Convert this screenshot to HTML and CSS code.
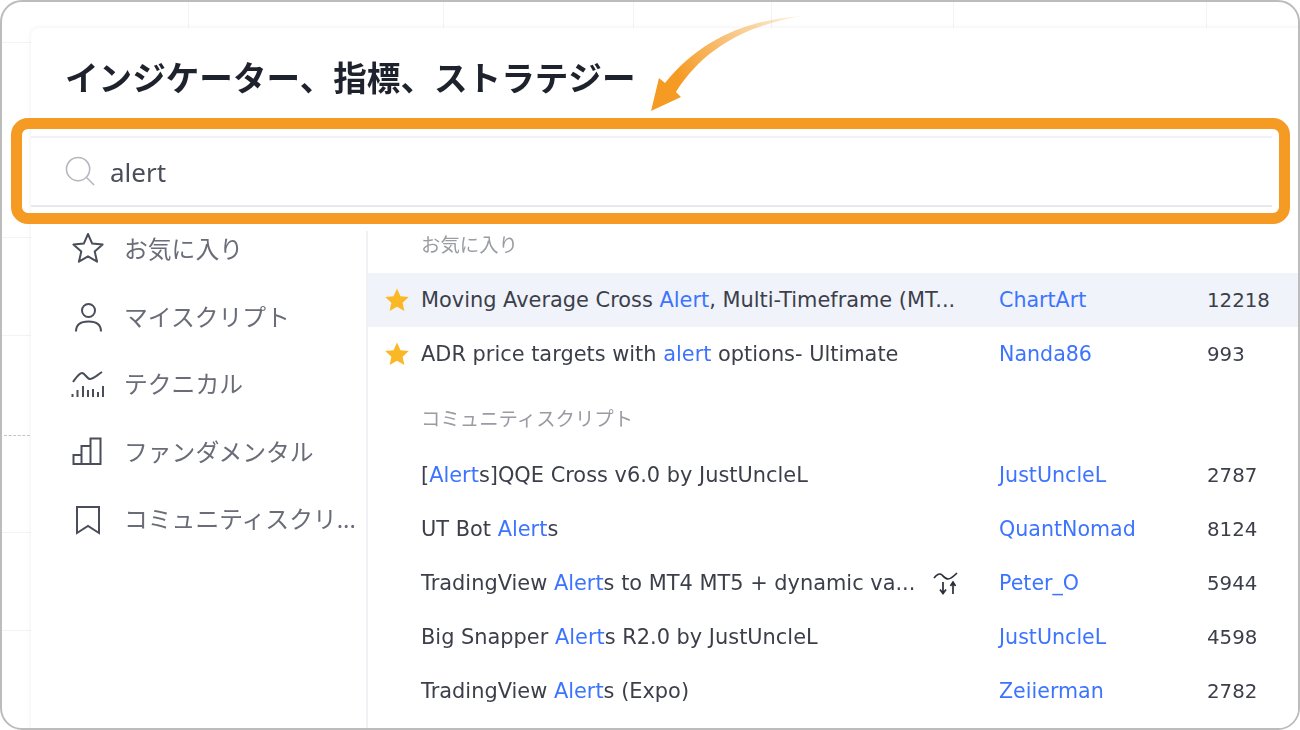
FILE: index.html
```html
<!DOCTYPE html>
<html lang="ja">
<head>
    <meta charset="UTF-8">
    <title>インジケーター、指標、ストラテジー</title>
    <link rel="stylesheet" href="styles.css">
</head>
<body>
    <div class="frame">
        <div class="chart-dots"></div>
        <div class="dialog">
            <h1 class="dialog-title">インジケーター、指標、ストラテジー</h1>
            <div class="search">
                <svg class="search-icon" viewBox="0 0 32 32" fill="none" stroke="#b4b6bd" stroke-width="1.6">
                    <circle cx="13.5" cy="13.5" r="12"/>
                    <path d="M22.5 22.5 30 30"/>
                </svg>
                <span class="search-text">alert</span>
            </div>
            <div class="dialog-body">
                <nav class="side">
                    <a href="#" class="side-link">
                        <svg class="side-icon" viewBox="0 0 34 34" fill="none" stroke="#4a4e5a" stroke-width="2">
                            <path d="M17 3l4.200 9.600 10.400 1-7.900 6.900 2.400 10.200-9.100-5.400-9.100 5.400 2.400-10.200-7.900-6.900 10.400-1z" stroke-linejoin="round"/>
                        </svg>
                        お気に入り
                    </a>
                    <a href="#" class="side-link">
                        <svg class="side-icon" viewBox="0 0 34 34" fill="none" stroke="#4a4e5a" stroke-width="2">
                            <circle cx="17.500" cy="12.500" r="6.500"/>
                            <path d="M5 33.500c0-6 4-10 12.500-10s12.500 4 12.500 10"/>
                        </svg>
                        マイスクリプト
                    </a>
                    <a href="#" class="side-link">
                        <svg class="side-icon" viewBox="0 0 34 34" fill="none" stroke="#4a4e5a" stroke-width="2">
                            <path d="M2 16C5 12 8 7 11 7c3 0 5 6 8 6s6-3 12-7"/>
                            <path d="M1.500 31v-3M6.500 31v-7M12 31v-11M17 31v-7M22 31v-8M27 31v-5M32 31v-11"/>
                        </svg>
                        テクニカル
                    </a>
                    <a href="#" class="side-link">
                        <svg class="side-icon" viewBox="0 0 34 34" fill="none" stroke="#4a4e5a" stroke-width="2">
                            <path d="M2.500 31V22h8v9zM10.500 31V13h9v18zM19.500 31V5.500h10V31z"/>
                        </svg>
                        ファンダメンタル
                    </a>
                    <a href="#" class="side-link">
                        <svg class="side-icon" viewBox="0 0 34 34" fill="none" stroke="#4a4e5a" stroke-width="2">
                            <path d="M6 6h22v26l-11-7-11 7z"/>
                        </svg>
                        コミュニティスクリ...
                    </a>
                </nav>
                <div class="results">
                    <div class="section-label">お気に入り</div>
                    <div class="row active">
                        <svg class="fav" viewBox="0 0 24 24"><path d="M12 .5l3.500 7.700 8.300.9-6.200 5.600 1.800 8.300L12 18.700 4.600 23l1.800-8.300L.2 9.100l8.300-.9z"/></svg>
                        <span class="name">Moving Average Cross <b>Alert</b>, Multi-Timeframe (MT...</span>
                        <span class="author">ChartArt</span>
                        <span class="count">12218</span>
                    </div>
                    <div class="row">
                        <svg class="fav" viewBox="0 0 24 24"><path d="M12 .5l3.500 7.700 8.300.9-6.200 5.600 1.800 8.300L12 18.700 4.600 23l1.800-8.300L.2 9.100l8.300-.9z"/></svg>
                        <span class="name">ADR price targets with <b>alert</b> options- Ultimate</span>
                        <span class="author">Nanda86</span>
                        <span class="count">993</span>
                    </div>
                    <div class="section-label second">コミュニティスクリプト</div>
                    <div class="row">
                        <span class="name">[<b>Alert</b>s]QQE Cross v6.0 by JustUncleL</span>
                        <span class="author">JustUncleL</span>
                        <span class="count">2787</span>
                    </div>
                    <div class="row">
                        <span class="name">UT Bot <b>Alert</b>s</span>
                        <span class="author">QuantNomad</span>
                        <span class="count">8124</span>
                    </div>
                    <div class="row">
                        <span class="name">TradingView <b>Alert</b>s to MT4 MT5 + dynamic va...</span>
                        <svg class="strategy-icon" viewBox="0 0 26 24" fill="none" stroke="#2a2e39" stroke-width="1.700">
                            <path d="M1 7c3-4 6-5 8-3s3.500 4 6 4 6-3 9-6"/>
                            <path d="M10 11v11M7 18.500l3 4 3-4"/>
                            <path d="M20 23V11M17.500 15l2.500-4 2.500 4"/>
                        </svg>
                        <span class="author">Peter_O</span>
                        <span class="count">5944</span>
                    </div>
                    <div class="row">
                        <span class="name">Big Snapper <b>Alert</b>s R2.0 by JustUncleL</span>
                        <span class="author">JustUncleL</span>
                        <span class="count">4598</span>
                    </div>
                    <div class="row">
                        <span class="name">TradingView <b>Alert</b>s (Expo)</span>
                        <span class="author">Zeiierman</span>
                        <span class="count">2782</span>
                    </div>
                </div>
            </div>
        </div>
        <!-- annotation on top of the screenshot -->
        <div class="callout"></div>
        <svg class="callout-arrow" viewBox="648 14 160 100">
            <defs>
                <linearGradient id="arrow-fade" gradientUnits="userSpaceOnUse" x1="660" y1="95" x2="802" y2="16">
                    <stop offset="0.15" stop-color="#f59a23"/>
                    <stop offset="1" stop-color="#f59a23" stop-opacity="0.1"/>
                </linearGradient>
            </defs>
            <path fill="url(#arrow-fade)" d="M802 16C745 20 700 40 665 83L659 78 651 111 681 97 676 92C705 46 750 25 802 16Z"/>
        </svg>
    </div>
</body>
</html>
```

FILE: styles.css
```css
html, body {
    margin: 0;
    height: 100%;
    background: #fff;
}
body {
    font-family: "Noto Sans", "Noto Sans CJK JP", sans-serif;
    overflow: hidden;
}
.frame {
    position: relative;
    box-sizing: border-box;
    width: 1300px;
    height: 730px;
    padding: 26px 0 0 29px;
    border: 2px solid #bcbcbc;
    border-radius: 22px;
    overflow: hidden;
    filter: blur(0.4px); /* the reference is an upscaled capture */
    /* faint chart grid behind the dialog */
    background:
        linear-gradient(#f3f3f5, #f3f3f5) 186px 0 / 1px 28px no-repeat,
        linear-gradient(#f3f3f5, #f3f3f5) 441px 0 / 1px 28px no-repeat,
        linear-gradient(#f3f3f5, #f3f3f5) 631px 0 / 1px 28px no-repeat,
        linear-gradient(#f3f3f5, #f3f3f5) 769px 0 / 1px 28px no-repeat,
        linear-gradient(#f3f3f5, #f3f3f5) 951px 0 / 1px 28px no-repeat,
        linear-gradient(#f3f3f5, #f3f3f5) 1204px 0 / 1px 28px no-repeat,
        linear-gradient(#f3f3f5, #f3f3f5) 0 40px / 30px 1px no-repeat,
        linear-gradient(#f3f3f5, #f3f3f5) 0 235px / 30px 1px no-repeat,
        linear-gradient(#f3f3f5, #f3f3f5) 0 333px / 30px 1px no-repeat,
        linear-gradient(#f3f3f5, #f3f3f5) 0 530px / 30px 1px no-repeat,
        linear-gradient(#f3f3f5, #f3f3f5) 0 628px / 30px 1px no-repeat,
        #fff;
}
.chart-dots {
    position: absolute;
    left: 2px;
    top: 433px;
    width: 26px;
    border-top: 1px dashed #c4c4c8;
}
.dialog {
    display: flex;
    flex-direction: column;
    height: 760px;
    margin-right: -40px;
    background: #fff;
    border-radius: 8px 0 0 0;
    box-shadow: 0 0 5px rgba(0, 0, 0, 0.07);
}
.dialog-title {
    box-sizing: border-box;
    height: 108px;
    margin: 0;
    padding: 28px 0 0 34px;
    font-size: 33.6px;
    line-height: 44px;
    font-weight: 700;
    color: #1e222d;
}
.search {
    box-sizing: border-box;
    display: flex;
    align-items: center;
    height: 71px;
    margin-right: 66px;
    padding-left: 34px;
    border-top: 2px solid #f0f0f5;
    border-bottom: 2px solid #e8e8ee;
}
.search-icon {
    width: 31px;
    height: 31px;
    margin-right: 14px;
}
.search-text {
    font-size: 26px;
    line-height: 32px;
    color: #4a4e5a;
}
.dialog-body {
    display: flex;
    flex: 1;
}
.side {
    box-sizing: border-box;
    width: 337px;
    padding-top: 7px;
    /* divider only starts below the search row */
    background: linear-gradient(#f0f1f4, #f0f1f4) right 24px / 2px 100% no-repeat;
}
.side-link {
    display: flex;
    align-items: center;
    height: 67.5px;
    padding-left: 40px;
    font-size: 23.8px;
    color: #6a6d78;
    text-decoration: none;
    white-space: nowrap;
}
.side-icon {
    flex: none;
    width: 34px;
    height: 34px;
    margin-right: 19px;
}
.results {
    flex: 1;
    font-family: "DejaVu Sans", "Noto Sans CJK JP", sans-serif;
    font-size: 20.9px;
    color: #3c3f4a;
}
.section-label {
    height: 24px;
    padding: 26px 0 16px 53px;
    font-family: "Noto Sans", "Noto Sans CJK JP", sans-serif;
    font-size: 19.4px;
    line-height: 24px;
    color: #9a9ca3;
}
.section-label.second {
    padding-bottom: 17px;
}
.row {
    position: relative;
    display: grid;
    grid-template-columns: 578px 208px auto;
    align-items: center;
    height: 54px;
    padding-left: 53px;
    white-space: nowrap;
}
.row > * {
    grid-row: 1;
}
.row.active {
    background: #f0f3fa;
}
.fav {
    position: absolute;
    left: 17px;
    top: 15px;
    width: 24px;
    height: 24px;
    fill: #fbb826;
}
.name {
    grid-column: 1;
}
.name b, .author {
    font-weight: 400;
    color: #3d74ff;
}
.author {
    grid-column: 2;
    font-size: 20.6px;
}
.count {
    grid-column: 3;
    font-size: 19.8px;
}
.strategy-icon {
    grid-column: 1;
    justify-self: end;
    width: 26px;
    height: 24px;
    margin-right: 40px;
}
.callout {
    position: absolute;
    left: 9px;
    top: 116px;
    box-sizing: border-box;
    width: 1279px;
    height: 106px;
    border: 11px solid #f59a23;
    border-radius: 17px;
}
.callout-arrow {
    position: absolute;
    left: 646px;
    top: 12px;
    width: 160px;
    height: 100px;
}
```
